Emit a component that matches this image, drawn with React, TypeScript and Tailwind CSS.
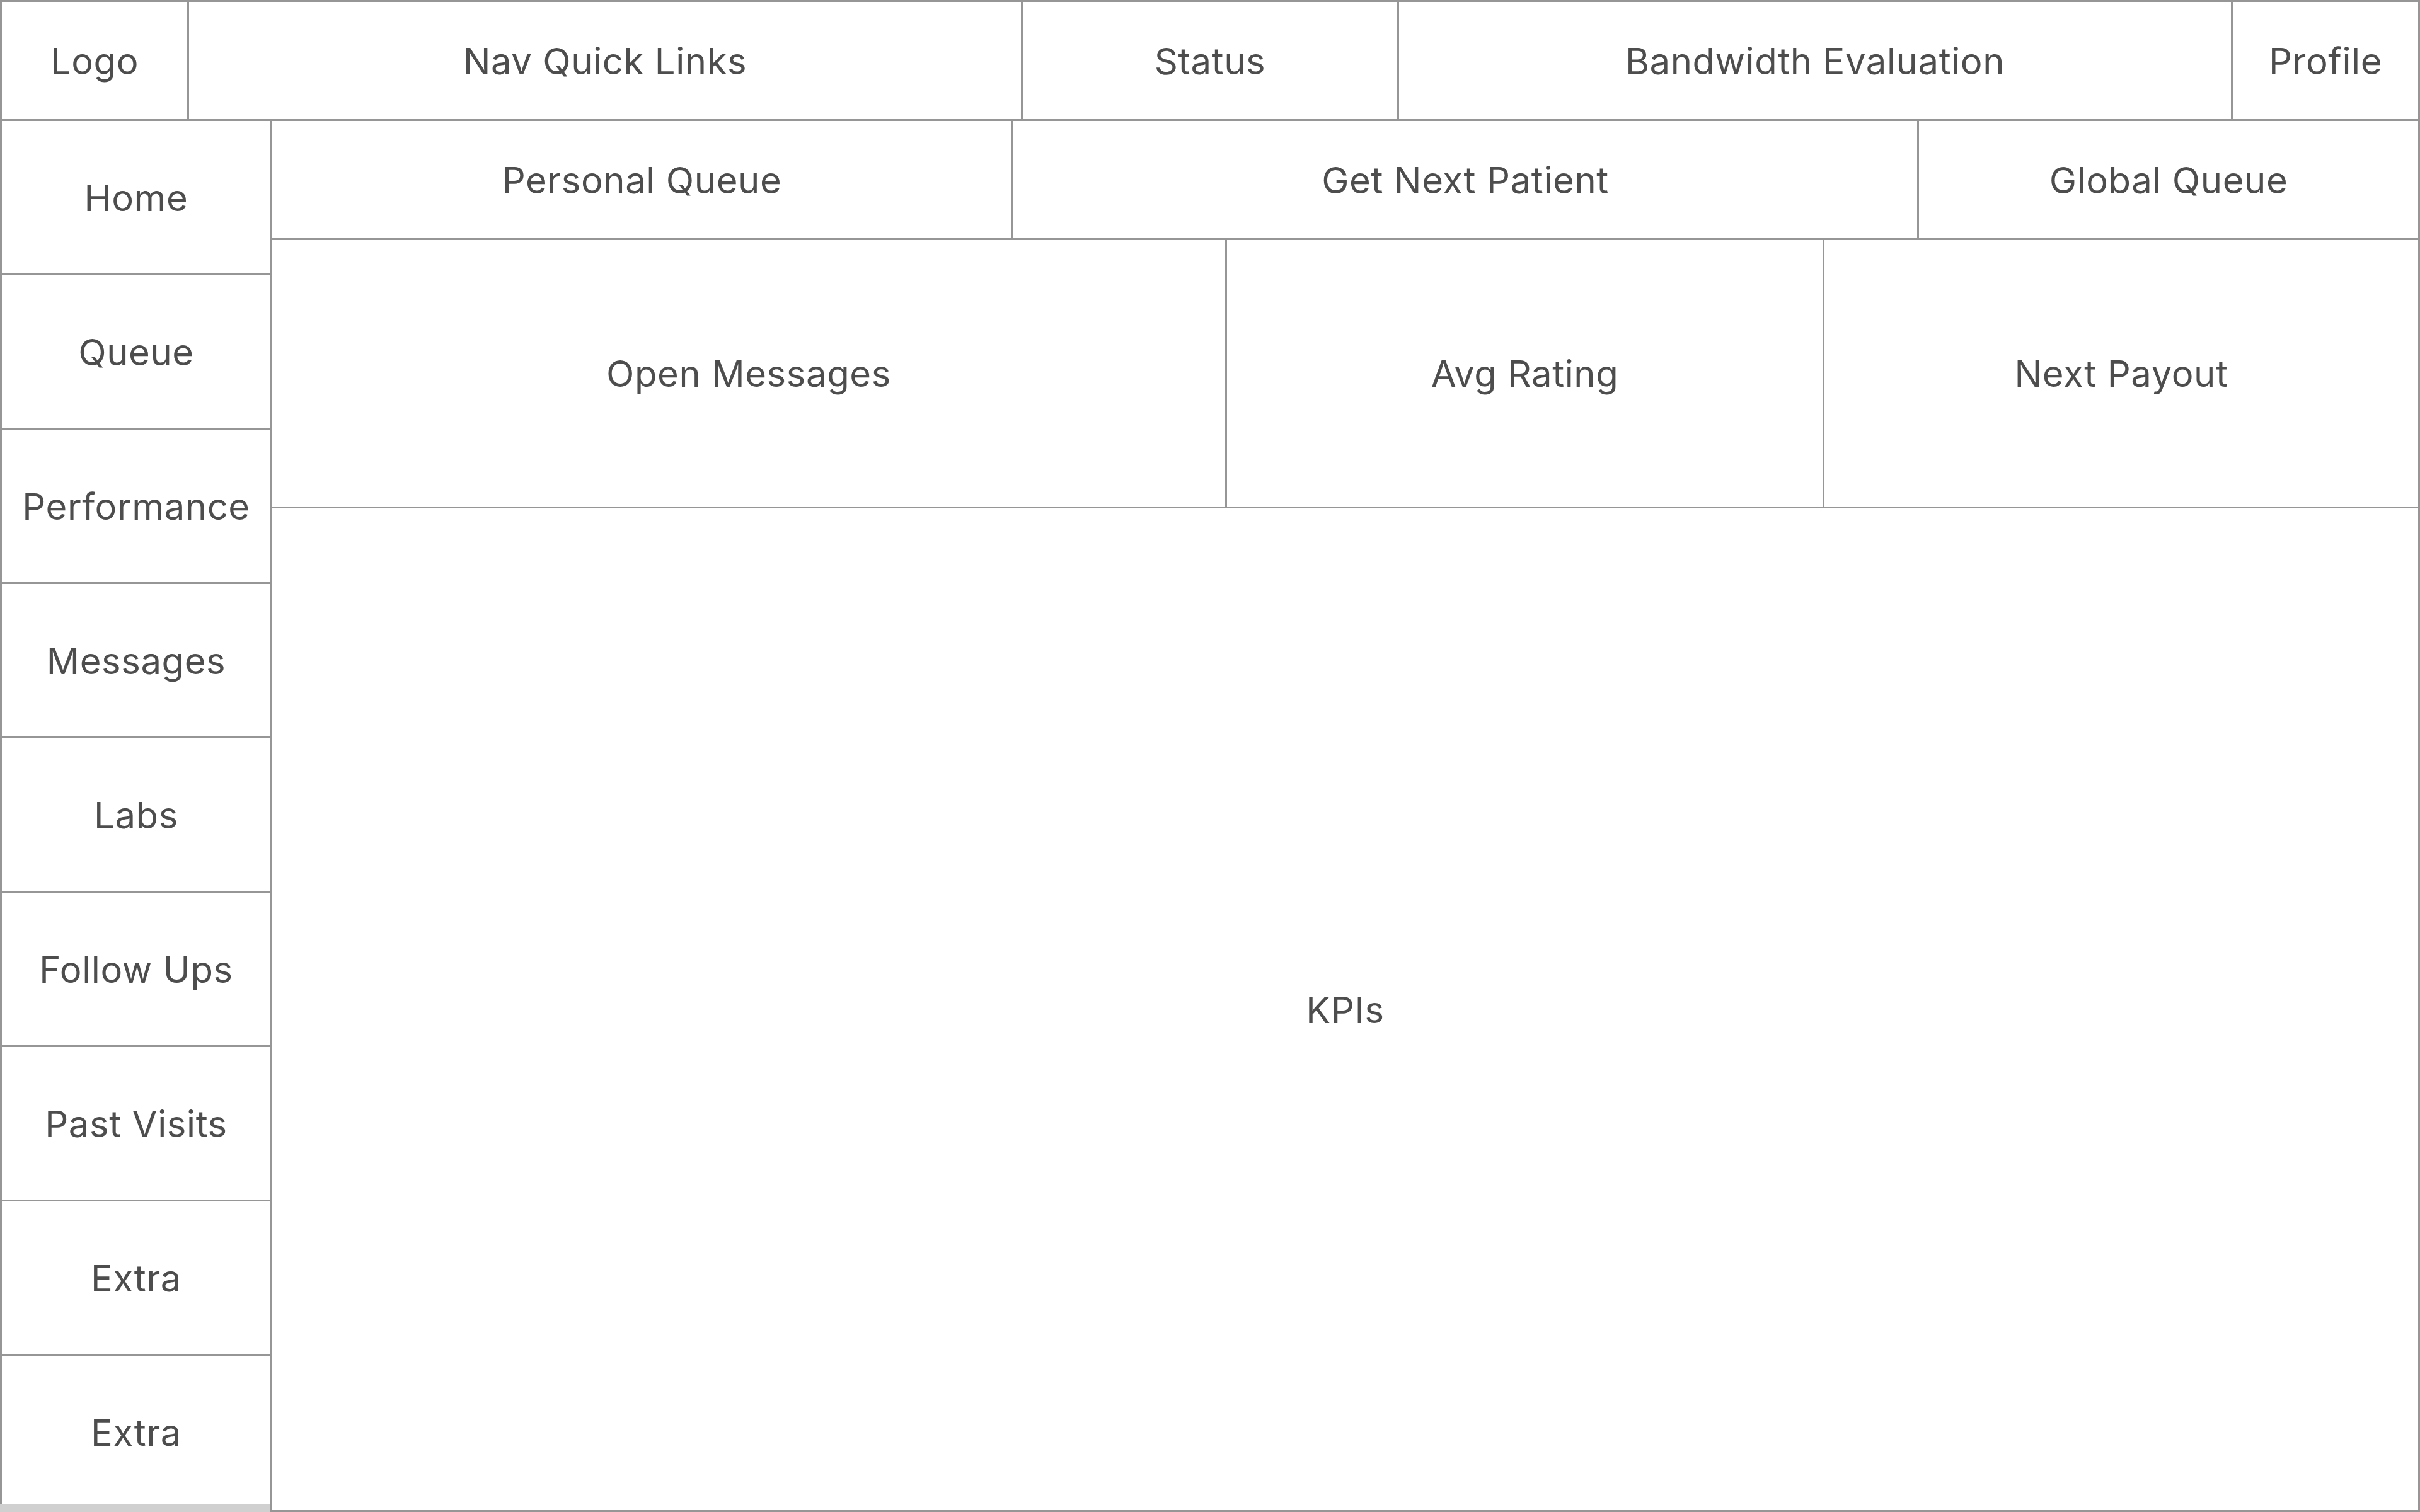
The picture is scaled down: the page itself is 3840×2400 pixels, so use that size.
const cell = "flex items-center justify-center text-[58px] tracking-[0.01em] text-[#4d4d4d] pt-[2px]"

const sideItems = [
  "Home",
  "Queue",
  "Performance",
  "Messages",
  "Labs",
  "Follow Ups",
  "Past Visits",
  "Extra",
  "Extra",
]

export default function App() {
  return (
    <div
      className="w-[3840px] h-[2400px] bg-white flex flex-col overflow-hidden"
      style={{ fontFamily: "Inter, 'Noto Sans', sans-serif" }}
    >
      {/* Top bar */}
      <div className="h-[192px] flex border-[3px] border-[#969696] shrink-0">
        <div className={`${cell} w-[297px] border-r-[3px] border-[#969696]`}>Logo</div>
        <div className={`${cell} w-[1323px] border-r-[3px] border-[#969696]`}>Nav Quick Links</div>
        <div className={`${cell} w-[597px] border-r-[3px] border-[#969696]`}>Status</div>
        <div className={`${cell} w-[1323px] border-r-[3px] border-[#969696]`}>Bandwidth Evaluation</div>
        <div className={`${cell} flex-1`}>Profile</div>
      </div>

      <div className="flex flex-1 min-h-0">
        {/* Sidebar */}
        <div className="w-[432px] flex flex-col border-r-[3px] border-[#969696]">
          <div className="flex-1 min-h-0 overflow-hidden border-l-[3px] border-[#969696]">
            {sideItems.map((item, i) => (
              <div
                key={i}
                className={`${cell} h-[245px] border-b-[3px] border-[#969696]`}
              >
                {item}
              </div>
            ))}
          </div>
          <div className="h-[12px] bg-[#d0d0d0] shrink-0" />
        </div>

        {/* Main */}
        <div className="flex-1 flex flex-col border-r-[3px] border-b-[3px] border-[#969696]">
          <div className="h-[189px] flex border-b-[3px] border-[#969696] shrink-0">
            <div className={`${cell} w-[1176px] border-r-[3px] border-[#969696]`}>Personal Queue</div>
            <div className={`${cell} w-[1437px] border-r-[3px] border-[#969696]`}>Get Next Patient</div>
            <div className={`${cell} flex-1`}>Global Queue</div>
          </div>
          <div className="h-[426px] flex border-b-[3px] border-[#969696] shrink-0">
            <div className={`${cell} w-[1515px] border-r-[3px] border-[#969696]`}>Open Messages</div>
            <div className={`${cell} w-[948px] border-r-[3px] border-[#969696]`}>Avg Rating</div>
            <div className={`${cell} flex-1`}>Next Payout</div>
          </div>
          <div className={`${cell} flex-1`}>KPIs</div>
        </div>
      </div>
    </div>
  )
}
